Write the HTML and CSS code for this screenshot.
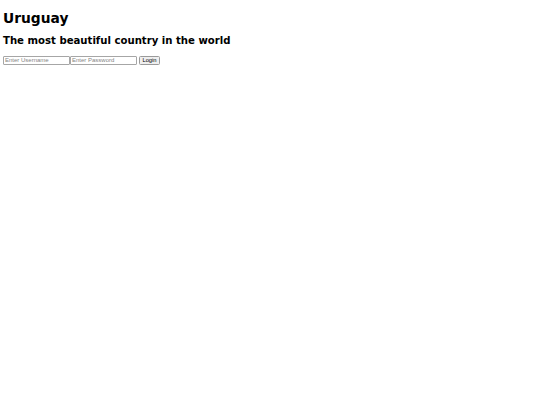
FILE: index.html
```
<!DOCTYPE html>
<html>
<head>
<meta charset="utf-8">
<title>Uruguay</title>
<link rel="stylesheet" href="styles.css">
</head>
<body class="page">
<h1 class="title">Uruguay</h1>
<h2 class="subtitle">The most beautiful country in the world</h2>
<form class="login">
<input class="field" type="text" placeholder="Enter Username"><input class="field" type="password" placeholder="Enter Password">
<button class="btn" type="button">Login</button>
</form>
</body>
</html>
```
FILE: styles.css
```
html {
  background: #fff;
}
.page {
  font-family: "DejaVu Sans", sans-serif;
  margin: 0 3px;
  color: #000;
}
.title {
  font-size: 13.8px;
  line-height: 16.5px;
  margin: 9.6px 0 9.4px;
}
.subtitle {
  font-size: 10.15px;
  line-height: 12.4px;
  margin: 0 0 8px;
}
.login {
  margin: 0;
  display: flex;
  align-items: flex-start;
}
.field {
  box-sizing: border-box;
  width: 67px;
  height: 9px;
  margin: 0;
  padding: 0 1px;
  border: 1px solid #a6a6a6;
  border-radius: 1px;
  font-family: "Liberation Sans", Arial, sans-serif;
  font-size: 6px;
  line-height: 7px;
  color: #000;
  background: #fff;
}
.field::placeholder {
  color: #858585;
}
.btn {
  box-sizing: border-box;
  width: 21px;
  height: 9px;
  margin: 0 0 0 2px;
  padding: 0;
  border: 1px solid #9a9a9a;
  border-radius: 1.5px;
  background: #efefef;
  font-family: "Liberation Sans", Arial, sans-serif;
  font-size: 5.8px;
  line-height: 7px;
  color: #000;
}
```
